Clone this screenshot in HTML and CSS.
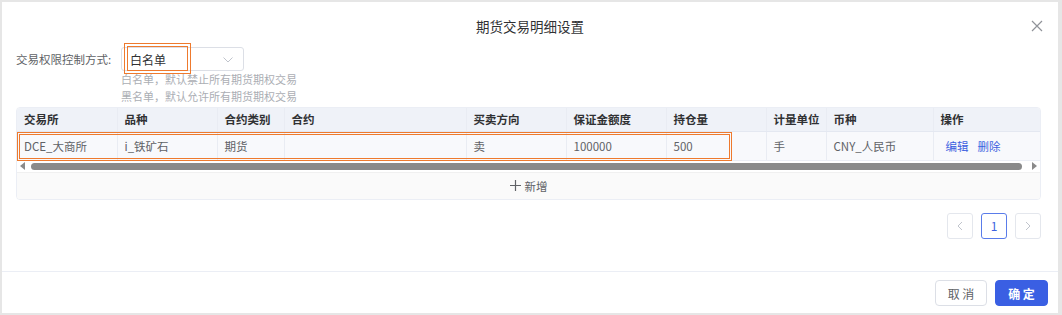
FILE: index.html
```html
<!DOCTYPE html>
<html lang="zh-CN">
<head>
    <meta charset="UTF-8">
    <title>期货交易明细设置</title>
    <link rel="stylesheet" href="styles.css">
</head>
<body>
    <div class="dialog">
        <header class="dialog-header">
            <span class="dialog-title">期货交易明细设置</span>
            <button class="close-btn" aria-label="关闭">
                <svg width="12" height="12" viewBox="0 0 12 12"><path d="M1 1 L11 11 M11 1 L1 11" stroke="#909399" stroke-width="1.2" fill="none"/></svg>
            </button>
        </header>

        <div class="dialog-body">
            <div class="form-row">
                <label class="form-label">交易权限控制方式:</label>
                <div class="form-field">
                    <div class="select">
                        <span class="select-value">白名单</span>
                        <svg class="select-arrow" width="10" height="6" viewBox="0 0 10 6"><path d="M0.5 0.5 L5 5 L9.5 0.5" stroke="#c0c4cc" stroke-width="1" fill="none"/></svg>
                        <span class="mark mark-select"></span>
                    </div>
                    <p class="hint">白名单，默认禁止所有期货期权交易</p>
                    <p class="hint">黑名单，默认允许所有期货期权交易</p>
                </div>
            </div>

            <div class="table-box">
                <table class="grid">
                    <colgroup>
                        <col style="width:100px">
                        <col style="width:100px">
                        <col style="width:67px">
                        <col style="width:182px">
                        <col style="width:100px">
                        <col style="width:100px">
                        <col style="width:100px">
                        <col style="width:60px">
                        <col style="width:107px">
                        <col style="width:109px">
                    </colgroup>
                    <thead>
                        <tr>
                            <th>交易所</th>
                            <th>品种</th>
                            <th>合约类别</th>
                            <th>合约</th>
                            <th>买卖方向</th>
                            <th>保证金额度</th>
                            <th>持仓量</th>
                            <th>计量单位</th>
                            <th>币种</th>
                            <th class="fixed">操作</th>
                        </tr>
                    </thead>
                    <tbody>
                        <tr>
                            <td>DCE_大商所</td>
                            <td>i_铁矿石</td>
                            <td>期货</td>
                            <td></td>
                            <td>卖</td>
                            <td>100000</td>
                            <td>500</td>
                            <td>手</td>
                            <td>CNY_人民币</td>
                            <td class="fixed"><a class="link">编辑</a><a class="link">删除</a></td>
                        </tr>
                    </tbody>
                </table>
                <span class="mark mark-row"></span>
                <div class="scrollbar">
                    <span class="arrow arrow-left"></span>
                    <span class="thumb"></span>
                    <span class="arrow arrow-right"></span>
                </div>
                <div class="add-row">
                    <svg width="11" height="11" viewBox="0 0 11 11"><path d="M5.5 0 V11 M0 5.5 H11" stroke="#606266" stroke-width="1.2"/></svg>
                    <span>新增</span>
                </div>
            </div>

            <div class="pager">
                <button class="page-btn disabled">
                    <svg width="6" height="10" viewBox="0 0 6 10"><path d="M5 1 L1 5 L5 9" stroke="#c0c4cc" fill="none"/></svg>
                </button>
                <button class="page-btn active">1</button>
                <button class="page-btn disabled">
                    <svg width="6" height="10" viewBox="0 0 6 10"><path d="M1 1 L5 5 L1 9" stroke="#c0c4cc" fill="none"/></svg>
                </button>
            </div>
        </div>

        <footer class="dialog-footer">
            <button class="btn">取 消</button>
            <button class="btn btn-primary">确 定</button>
        </footer>
    </div>
</body>
</html>
```

FILE: styles.css
```css
/* base */
* {
    box-sizing: border-box;
}

body {
    margin: 0;
    background-color: #e6e6e6;
    font-family: "Noto Sans CJK SC", "Noto Sans", sans-serif;
    font-size: 11.5px;
    color: #606266;
}

button {
    font-family: inherit;
    cursor: pointer;
}

.dialog {
    margin: 2px 4px 2px 2px;
    height: 311px;
    background: #fff;
    display: flex;
    flex-direction: column;
}

/* header */
.dialog-header {
    position: relative;
    height: 44px;
    display: flex;
    align-items: center;
    justify-content: center;
    padding-top: 4px;
}

.dialog-title {
    font-size: 13.5px;
    color: #303133;
}

.close-btn {
    position: absolute;
    right: 15px;
    top: 18px;
    border: none;
    background: none;
    padding: 0;
    width: 12px;
    height: 12px;
    display: flex;
}

/* body */
.dialog-body {
    flex: 1;
    padding: 1px 16px 0 14px;
}

.form-row {
    display: flex;
    align-items: flex-start;
}

.form-label {
    width: 105px;
    line-height: 24px;
    color: #606266;
}

.form-field {
    display: flex;
    flex-direction: column;
}

.select {
    position: relative;
    width: 123px;
    height: 24px;
    border: 1px solid #dcdfe6;
    border-radius: 3px;
    display: flex;
    align-items: center;
    justify-content: space-between;
    padding: 0 10px 0 8px;
    color: #303133;
    font-size: 12px;
}

.select-arrow {
    margin-top: 1px;
}

.hint {
    margin: 0;
    color: #abaeb4;
    font-size: 11px;
    line-height: 17px;
}

/* orange annotation boxes */
.mark {
    position: absolute;
    border: 4px double #ee7a2e;
    pointer-events: none;
}

.mark-select {
    left: 2px;
    top: -5px;
    width: 67px;
    height: 31px;
}

.mark-row {
    left: 0;
    top: 24px;
    width: 715px;
    height: 29px;
    border-width: 3px;
}

/* table */
.table-box {
    position: relative;
    margin-top: 2px;
    width: 1025px;
    border: 1px solid #ebeef5;
    border-radius: 4px;
    overflow: hidden;
}

.grid {
    width: 100%;
    table-layout: fixed;
    border-collapse: collapse;
}

.grid th,
.grid td {
    text-align: left;
    padding: 0 7px;
    white-space: nowrap;
    overflow: hidden;
    border-right: 1px solid #e9ecf3;
}

.grid th {
    height: 23px;
    background: #eff2f8;
    color: #303133;
    font-weight: 600;
    border-bottom: 1px solid #e4e8f1;
}

.grid td {
    height: 29px;
    background: #f8f9fc;
    color: #606266;
    border-bottom: 1px solid #ebeef5;
}

.grid th:last-child,
.grid td:last-child {
    border-right: none;
}

.grid .fixed {
    box-shadow: -4px 0 6px -2px rgba(0, 0, 0, 0.08);
}

.link {
    color: #3d62e0;
    margin-left: 5px;
    margin-right: 4px;
}

.scrollbar {
    height: 11px;
    display: flex;
    align-items: center;
    padding: 0 3px 0 3px;
    background: #fff;
}

.arrow {
    width: 0;
    height: 0;
    border-top: 4px solid transparent;
    border-bottom: 4px solid transparent;
}

.arrow-left {
    border-right: 5px solid #8a8a8a;
}

.arrow-right {
    border-left: 5px solid #8a8a8a;
}

.thumb {
    flex: 1;
    height: 7px;
    margin: 0 10px 0 6px;
    background: #8a8a8a;
    border-radius: 4px;
}

.add-row {
    height: 27px;
    background: #fafafa;
    border-top: 1px solid #f0f0f0;
    display: flex;
    align-items: center;
    justify-content: center;
    gap: 4px;
    color: #606266;
}

/* pagination */
.pager {
    display: flex;
    justify-content: flex-end;
    gap: 8px;
    margin-top: 13px;
    width: 1025px;
}

.page-btn {
    width: 26px;
    height: 26px;
    border: 1px solid #e4e7ed;
    border-radius: 3px;
    background: #fff;
    color: #3d62e0;
    font-size: 12px;
    display: flex;
    align-items: center;
    justify-content: center;
    padding: 0;
}

.page-btn.active {
    border-color: #5a7cea;
}

/* footer */
.dialog-footer {
    height: 42px;
    border-top: 1px solid #ebeef5;
    display: flex;
    justify-content: flex-end;
    align-items: center;
    gap: 8px;
    padding: 1px 10px 0 0;
}

.btn {
    height: 26px;
    width: 52px;
    border: 1px solid #dcdfe6;
    border-radius: 4px;
    background: #fff;
    color: #606266;
    font-size: 12px;
    padding: 0;
}

.btn-primary {
    width: 53px;
    background: #3a5fe3;
    border-color: #3a5fe3;
    color: #fff;
    font-weight: 600;
}
```
